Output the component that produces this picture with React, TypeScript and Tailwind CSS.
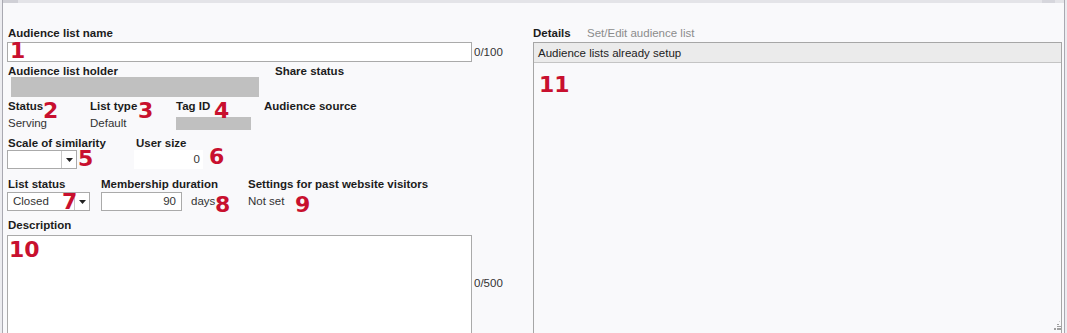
import type { ReactNode } from 'react'

function Num({ children, className }: { children: ReactNode; className: string }) {
  return (
    <span
      className={`pointer-events-none absolute font-['DejaVu_Sans',sans-serif] text-[22px] font-bold leading-[16px] text-[#c8102e] ${className}`}
    >
      {children}
    </span>
  )
}

function Label({ children, className = '' }: { children: ReactNode; className?: string }) {
  return <div className={`h-[13px] text-[11.5px] font-bold leading-[13px] text-[#1c1c1c] ${className}`}>{children}</div>
}

function Arrow() {
  return (
    <svg width="7" height="4" viewBox="0 0 7 4" className="block">
      <polygon points="0,0 7,0 3.5,4" fill="#222" />
    </svg>
  )
}

export default function App() {
  return (
    <div className="relative h-[333px] w-[1067px] overflow-hidden bg-[#ececf0] font-['Liberation_Sans',Arial,sans-serif] text-[#333]">
      <div className="ml-[2px] h-full w-[1063px] border-x border-[#a9a9b1] bg-[#f9f9fb]">
        {/* top strip */}
        <div className="flex h-[3px] bg-[#e4e4e8]">
          <div className="w-[15px] bg-[#d0d0d6]" />
          <div className="flex-1" />
          <div className="mr-[9px] w-[13px] bg-[#d6d6dc]" />
        </div>

        <div className="flex pt-[24px]">
          {/* left form */}
          <div className="flex w-[530px] flex-col pl-[4px]">
            <Label className="pl-[1px]">Audience list name</Label>
            <div className="mt-[2px] flex items-center">
              <div className="h-[20px] w-[465px] border border-[#aaaaaa] bg-white" />
              <span className="ml-[2px] text-[11.5px] leading-[20px]">0/100</span>
            </div>

            <div className="mt-[3px] flex">
              <div className="flex w-[268px] flex-col">
                <Label className="pl-[1px]">Audience list holder</Label>
                <div className="ml-[4px] mt-[-1px] h-[20px] w-[248px] bg-[#c0c0c0]" />
              </div>
              <Label>Share status</Label>
            </div>

            <div className="mt-[3px] flex">
              <div className="flex w-[83px] flex-col pl-[1px]">
                <Label>Status</Label>
                <div className="mt-[4px] text-[11.5px] leading-[13px]">Serving</div>
              </div>
              <div className="flex w-[86px] flex-col">
                <Label>List type</Label>
                <div className="mt-[4px] text-[11.5px] leading-[13px]">Default</div>
              </div>
              <div className="flex w-[88px] flex-col">
                <Label>Tag ID</Label>
                <div className="mt-[4px] h-[13px] w-[75px] bg-[#c0c0c0]" />
              </div>
              <Label>Audience source</Label>
            </div>

            <div className="mt-[7px] flex">
              <div className="flex w-[127px] flex-col">
                <Label className="pl-[1px]">Scale of similarity</Label>
                <div className="flex h-[19px] w-[70px] border border-[#aaaaaa] bg-white">
                  <div className="flex-1" />
                  <div className="flex w-[15px] items-center justify-center border-l border-[#c8c8c8]">
                    <Arrow />
                  </div>
                </div>
              </div>
              <div className="flex flex-col">
                <Label className="pl-[2px]">User size</Label>
                <div className="flex h-[19px] w-[69px] items-center justify-end bg-white pr-[3px] text-[11.5px]">0</div>
              </div>
            </div>

            <div className="mt-[9px] flex">
              <div className="flex w-[94px] flex-col">
                <Label className="pl-[1px]">List status</Label>
                <div className="mt-[1px] flex h-[19px] w-[83px] border border-[#aaaaaa] bg-white">
                  <div className="flex-1 pl-[5px] text-[11.5px] leading-[17px]">Closed</div>
                  <div className="flex w-[15px] items-center justify-center border-l border-[#c8c8c8]">
                    <Arrow />
                  </div>
                </div>
              </div>
              <div className="flex w-[147px] flex-col">
                <Label>Membership duration</Label>
                <div className="mt-[1px] flex items-center">
                  <div className="flex h-[19px] w-[81px] items-center justify-end border border-[#aaaaaa] bg-white pr-[5px] text-[11.5px]">
                    90
                  </div>
                  <span className="ml-[9px] text-[11.5px]">days</span>
                </div>
              </div>
              <div className="flex flex-col">
                <Label>Settings for past website visitors</Label>
                <div className="mt-[1px] text-[11.5px] leading-[19px]">Not set</div>
              </div>
            </div>

            <Label className="mt-[8px] pl-[1px]">Description</Label>
            <div className="mt-[3px] flex items-start">
              <div className="h-[120px] w-[465px] shrink-0 border border-[#aaaaaa] bg-white" />
              <span className="ml-[2px] mt-[42px] text-[11.5px] leading-[13px]">0/500</span>
            </div>
          </div>

          {/* right panel */}
          <div className="flex w-[531px] flex-col">
            <div className="flex h-[13px] items-center text-[11.5px] leading-[13px]">
              <span className="w-[54px] font-bold text-[#1c1c1c]">Details</span>
              <span className="text-[#8c8c8c]">Set/Edit audience list</span>
            </div>
            <div className="relative mt-[2px] h-[300px] w-[529px] border border-[#a6a6a6] bg-[#f9f9fb]">
              <div className="h-[20px] border-b border-[#c4c4c4] bg-[#ebebeb] pl-[4px] text-[11.5px] leading-[20px] text-[#222]">
                Audience lists already setup
              </div>
              <svg width="7" height="10" viewBox="0 0 7 10" className="absolute right-0 top-[278px]">
                <rect x="5" y="0" width="1" height="1" fill="#d0d0d0" />
                <rect x="3" y="3" width="2" height="1" fill="#a0a0a0" />
                <rect x="3" y="5" width="4" height="1" fill="#a0a0a0" />
                <rect x="0" y="7" width="2" height="2" fill="#a0a0a0" />
                <rect x="3" y="7" width="4" height="2" fill="#a0a0a0" />
              </svg>
            </div>
          </div>
        </div>
      </div>

      {/* annotation markers */}
      <Num className="left-[10px] top-[43px]">1</Num>
      <Num className="left-[43px] top-[103px]">2</Num>
      <Num className="left-[138px] top-[103px]">3</Num>
      <Num className="left-[214px] top-[103px]">4</Num>
      <Num className="left-[78px] top-[151px]">5</Num>
      <Num className="left-[209px] top-[149px]">6</Num>
      <Num className="left-[62px] top-[194px]">7</Num>
      <Num className="left-[215px] top-[197px]">8</Num>
      <Num className="left-[295px] top-[197px]">9</Num>
      <Num className="left-[9px] top-[242px]">10</Num>
      <Num className="left-[539px] top-[77px]">11</Num>
    </div>
  )
}
